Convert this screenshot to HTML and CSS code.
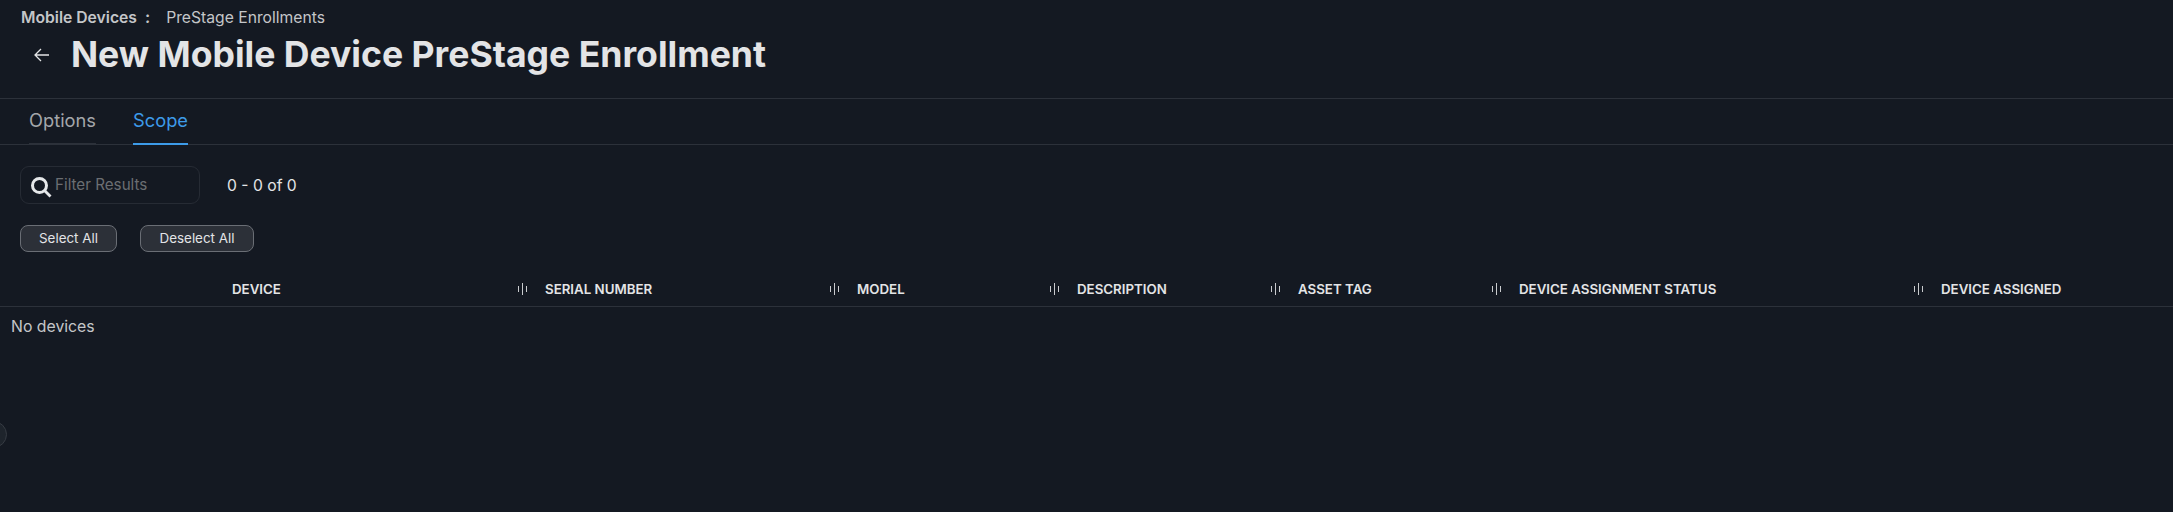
FILE: index.html
```html
<!DOCTYPE html>
<html>
<head>
	<meta charset="utf-8">
	<title>New Mobile Device PreStage Enrollment</title>
	<link rel="stylesheet" href="styles.css">
</head>
<body>
	<div class="head">
		<div class="crumbs">
			<span class="crumb-parent">Mobile Devices</span>
			<span class="crumb-sep">:</span>
			<span class="crumb-page">PreStage Enrollments</span>
		</div>
		<div class="title-row">
			<svg class="back" width="18" height="16" viewBox="0 0 18 16">
				<path d="M16 8H2M8 2L2 8l6 6" fill="none" stroke="#e3e4e6" stroke-width="1.3"/>
			</svg>
			<h1>New Mobile Device PreStage Enrollment</h1>
		</div>
	</div>

	<div class="tabs">
		<div class="tab">Options</div>
		<div class="tab active">Scope</div>
	</div>

	<div class="toolbar">
		<div class="filter">
			<svg class="search-icon" width="22" height="22" viewBox="0 0 22 22">
				<circle cx="9.5" cy="9.5" r="7" fill="none" stroke="#e6e8ea" stroke-width="3"/>
				<path d="M14.5 14.5L20.5 20.5" stroke="#e6e8ea" stroke-width="2.8"/>
			</svg>
			<span class="placeholder">Filter Results</span>
		</div>
		<div class="count">0 - 0 of 0</div>
	</div>

	<div class="actions">
		<button class="btn select-all">Select All</button>
		<button class="btn deselect-all">Deselect All</button>
	</div>

	<div class="table-head">
		<div class="col first">DEVICE</div>
		<div class="col"><span class="grip"></span>SERIAL NUMBER</div>
		<div class="col"><span class="grip"></span>MODEL</div>
		<div class="col"><span class="grip"></span>DESCRIPTION</div>
		<div class="col"><span class="grip"></span>ASSET TAG</div>
		<div class="col"><span class="grip"></span>DEVICE ASSIGNMENT STATUS</div>
		<div class="col"><span class="grip"></span>DEVICE ASSIGNED</div>
	</div>
	<div class="empty">No devices</div>

	<div class="nav-toggle"></div>
</body>
</html>
```

FILE: styles.css
```css
*{
	padding: 0;
	margin: 0;
	box-sizing: border-box;
}
html,body{
	height: 100%;
	overflow: hidden;
}
body{
	background: #141922;
	color: #e3e4e6;
	font-family: Inter, "Liberation Sans", sans-serif;
	position: relative;
}
.head{
	height: 98px;
	padding: 8px 0 0 21px;
}
.crumbs{
	display: flex;
	align-items: center;
	font-size: 15.7px;
	line-height: 20px;
	color: #c4c6c9;
}
.crumb-parent{
	font-weight: 600;
}
.crumb-sep{
	font-weight: 700;
	margin-left: 8px;
	margin-right: 16px;
}
.title-row{
	display: flex;
	align-items: center;
	margin-top: 5px;
	padding-left: 12px;
}
.back{
	margin-right: 20px;
}
h1{
	font-size: 35.6px;
	line-height: 44px;
	font-weight: 700;
	color: #e3e4e6;
}
.tabs{
	height: 47px;
	display: flex;
	gap: 37px;
	padding-left: 29px;
	border-top: 1px solid #2c313a;
	border-bottom: 1px solid #2c313a;
}
.tab{
	height: 46px;
	padding-top: 9px;
	font-size: 18.3px;
	line-height: 24px;
	color: #a4a7ab;
	border-bottom: 2px solid #2c313a;
}
.tab.active{
	color: #3d9be9;
	border-bottom-color: #3d9be9;
}
.toolbar{
	display: flex;
	align-items: center;
	margin-top: 21px;
	padding-left: 20px;
}
.filter{
	width: 180px;
	height: 38px;
	display: flex;
	align-items: center;
	padding-left: 9px;
	border: 1px solid #262b34;
	border-radius: 9px;
}
.search-icon{
	margin-top: 4px;
	margin-right: 3px;
}
.placeholder{
	font-size: 15.2px;
	color: #6b6e72;
	margin-top: -1px;
}
.count{
	margin-left: 27px;
	font-size: 15.7px;
	color: #e3e4e6;
}
.actions{
	display: flex;
	gap: 23px;
	margin-top: 21px;
	padding-left: 20px;
}
.btn{
	height: 27px;
	padding-bottom: 2px;
	border: 1px solid #6a6e75;
	border-radius: 8px;
	background: #2c3038;
	color: #e3e4e6;
	font-family: inherit;
	font-size: 13.4px;
}
.select-all{
	width: 97px;
}
.deselect-all{
	width: 114px;
}
.table-head{
	display: grid;
	grid-template-columns: 519px 312px 220px 221px 221px 422px 1fr;
	height: 55px;
	padding-top: 19px;
	align-items: center;
	border-bottom: 1px solid #2c313a;
}
.col{
	display: flex;
	align-items: center;
	font-size: 13.3px;
	font-weight: 600;
	color: #e3e4e6;
}
.col.first{
	padding-left: 232px;
}
.grip{
	width: 9px;
	height: 12px;
	margin-left: -1px;
	margin-right: 18px;
	background:
		linear-gradient(#c9cbce, #c9cbce) 0 3px / 1px 6px no-repeat,
		linear-gradient(#c9cbce, #c9cbce) 4px 0 / 1px 12px no-repeat,
		linear-gradient(#c9cbce, #c9cbce) 8px 3px / 1px 6px no-repeat;
}
.empty{
	padding: 10px 0 0 11px;
	font-size: 15.8px;
	line-height: 20px;
	color: #c4c6c9;
}
.nav-toggle{
	position: absolute;
	left: -20px;
	top: 421px;
	width: 27px;
	height: 27px;
	border-radius: 50%;
	background: #1e242c;
	border: 1px solid #363b43;
}
```
